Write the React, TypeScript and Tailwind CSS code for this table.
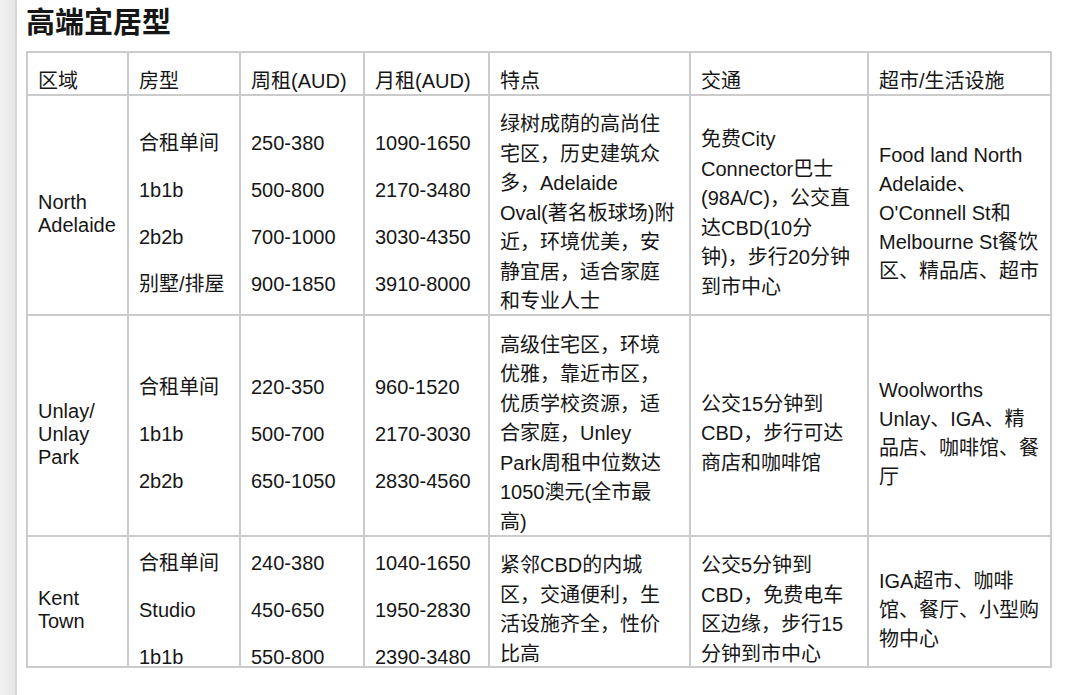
import React from 'react'

type Row = {
  area: string[]
  types: string[]
  weekly: string[]
  monthly: string[]
  features: string[]
  transit: string[]
  shops: string[]
  h: string
}

const rows: Row[] = [
  {
    area: ['North', 'Adelaide'],
    types: ['合租单间', '1b1b', '2b2b', '别墅/排屋'],
    weekly: ['250-380', '500-800', '700-1000', '900-1850'],
    monthly: ['1090-1650', '2170-3480', '3030-4350', '3910-8000'],
    features: ['绿树成荫的高尚住', '宅区，历史建筑众', '多，Adelaide', 'Oval(著名板球场)附', '近，环境优美，安', '静宜居，适合家庭', '和专业人士'],
    transit: ['免费City', 'Connector巴士', '(98A/C)，公交直', '达CBD(10分', '钟)，步行20分钟', '到市中心'],
    shops: ['Food land North', 'Adelaide、', "O'Connell St和", 'Melbourne St餐饮', '区、精品店、超市'],
    h: 'h-[220px]',
  },
  {
    area: ['Unlay/', 'Unlay', 'Park'],
    types: ['合租单间', '1b1b', '2b2b'],
    weekly: ['220-350', '500-700', '650-1050'],
    monthly: ['960-1520', '2170-3030', '2830-4560'],
    features: ['高级住宅区，环境', '优雅，靠近市区，', '优质学校资源，适', '合家庭，Unley', 'Park周租中位数达', '1050澳元(全市最', '高)'],
    transit: ['公交15分钟到', 'CBD，步行可达', '商店和咖啡馆'],
    shops: ['Woolworths', 'Unlay、IGA、精', '品店、咖啡馆、餐', '厅'],
    h: 'h-[221px]',
  },
  {
    area: ['Kent', 'Town'],
    types: ['合租单间', 'Studio', '1b1b'],
    weekly: ['240-380', '450-650', '550-800'],
    monthly: ['1040-1650', '1950-2830', '2390-3480'],
    features: ['紧邻CBD的内城', '区，交通便利，生', '活设施齐全，性价', '比高'],
    transit: ['公交5分钟到', 'CBD，免费电车', '区边缘，步行15', '分钟到市中心'],
    shops: ['IGA超市、咖啡', '馆、餐厅、小型购', '物中心'],
    h: 'h-[131px]',
  },
]

const headers = ['区域', '房型', '周租(AUD)', '月租(AUD)', '特点', '交通', '超市/生活设施']

const cell = 'border-r-2 border-b-2 border-[#cbcbcb] pl-[10px] pt-[17px] flex flex-col justify-center overflow-visible'

function Lines({ items, lh }: { items: string[]; lh: string }) {
  return (
    <>
      {items.map((t, i) => (
        <div key={i} className={`whitespace-nowrap ${lh}`}>
          {t}
        </div>
      ))}
    </>
  )
}

export default function App() {
  return (
    <div
      className="flex h-[695px] w-[1080px] bg-white text-[#161616] overflow-hidden"
      style={{ fontFamily: '"Liberation Sans", "Noto Sans CJK SC", sans-serif' }}
    >
      <div className="w-[17px] shrink-0 bg-gradient-to-r from-[#f2f2f2] to-[#e6e6e6] border-r-2 border-[#d6d6d6]" />

      <div className="pl-[9px]">
        <h1 className="mt-[5px] h-[36px] text-[29px] leading-[36px] font-bold">高端宜居型</h1>

        <div className="mt-[10px] w-[1026px] border-l-2 border-t-2 border-[#cbcbcb] grid grid-cols-[101px_112px_124px_125px_201px_178px_183px] text-[20px]">
          {headers.map((h) => (
            <div key={h} className="h-[43px] border-r-2 border-b-2 border-[#cbcbcb] pl-[10px] pt-[14px] leading-[29px] whitespace-nowrap">
              {h}
            </div>
          ))}

          {rows.map((r, i) => (
            <React.Fragment key={i}>
              <div className={`${cell} ${r.h}`}>
                <Lines items={r.area} lh="leading-[23px]" />
              </div>
              <div className={`${cell} ${r.h}`}>
                <Lines items={r.types} lh="leading-[47px]" />
              </div>
              <div className={`${cell} ${r.h}`}>
                <Lines items={r.weekly} lh="leading-[47px]" />
              </div>
              <div className={`${cell} ${r.h}`}>
                <Lines items={r.monthly} lh="leading-[47px]" />
              </div>
              <div className={`${cell} ${r.h}`}>
                <Lines items={r.features} lh="leading-[29.5px]" />
              </div>
              <div className={`${cell} ${r.h}`}>
                <Lines items={r.transit} lh="leading-[29.5px]" />
              </div>
              <div className={`${cell} ${r.h}`}>
                <Lines items={r.shops} lh="leading-[29px]" />
              </div>
            </React.Fragment>
          ))}
        </div>
      </div>
    </div>
  )
}
